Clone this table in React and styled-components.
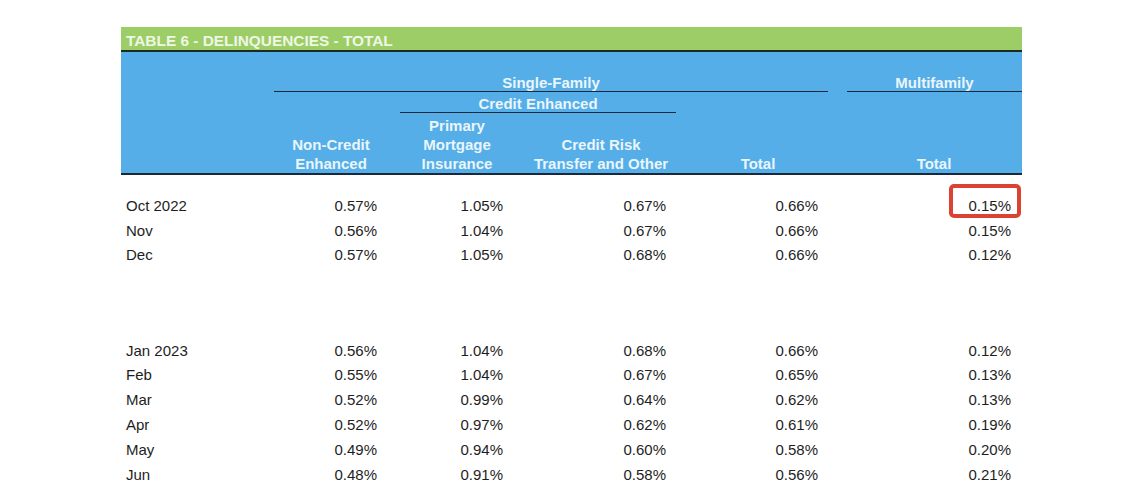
import React from 'react';
import styled, { createGlobalStyle } from 'styled-components';

const GlobalStyle = createGlobalStyle`
  body {
    margin: 0;
    background: #ffffff;
    font-family: "Liberation Sans", Arial, sans-serif;
  }
`;

// right padding of each value column, so numbers line up under their header
const columns = [
  { key: 'nce', pad: 34, head: ['Non-Credit', 'Enhanced'] },
  { key: 'pmi', pad: 33, head: ['Primary', 'Mortgage', 'Insurance'] },
  { key: 'crt', pad: 32, head: ['Credit Risk', 'Transfer and Other'] },
  { key: 'sf', pad: 39, head: ['Total'] },
  { key: 'mf', pad: 11, head: ['Total'] },
];

const firstBlock = [
  { label: 'Oct 2022', values: ['0.57%', '1.05%', '0.67%', '0.66%', '0.15%'], mark: 4 },
  { label: 'Nov', values: ['0.56%', '1.04%', '0.67%', '0.66%', '0.15%'] },
  { label: 'Dec', values: ['0.57%', '1.05%', '0.68%', '0.66%', '0.12%'] },
];

const secondBlock = [
  { label: 'Jan 2023', values: ['0.56%', '1.04%', '0.68%', '0.66%', '0.12%'] },
  { label: 'Feb', values: ['0.55%', '1.04%', '0.67%', '0.65%', '0.13%'] },
  { label: 'Mar', values: ['0.52%', '0.99%', '0.64%', '0.62%', '0.13%'] },
  { label: 'Apr', values: ['0.52%', '0.97%', '0.62%', '0.61%', '0.19%'] },
  { label: 'May', values: ['0.49%', '0.94%', '0.60%', '0.58%', '0.20%'] },
  { label: 'Jun', values: ['0.48%', '0.91%', '0.58%', '0.56%', '0.21%'] },
];

const Table = styled.div`
  width: 901px;
  margin: 27px 0 0 121px;
`;

const TitleBar = styled.div`
  height: 23px;
  background: #9dcd66;
  border-bottom: 2px solid #1c2a22;
  padding-left: 5px;
  display: flex;
  align-items: flex-end;
  color: #eef7e4;
  font-size: 15.4px;
  font-weight: 700;
  line-height: 18px;
`;

const HeaderBand = styled.div`
  background: #55aee7;
  border-bottom: 2px solid #1b2838;
  padding-top: 22px;
  color: #eaf5fc;
  font-size: 15px;
  font-weight: 700;
`;

const Grid = styled.div`
  display: grid;
  grid-template-columns: 159px 126px 125px 162px 159px 165px;
  padding-left: 5px;
`;

const GroupCell = styled.div`
  grid-column: ${(p) => p.$span};
  margin: 0 ${(p) => p.$mr}px 0 ${(p) => p.$ml}px;
  border-bottom: 1.5px solid #1b2838;
  text-align: center;
  line-height: 17px;
`;

const SubGroupRow = styled(Grid)`
  margin-top: 3px;
`;

const HeadRow = styled(Grid)`
  margin-top: 3px;
`;

const HeadCell = styled.div`
  grid-column: ${(p) => p.$col};
  padding-right: ${(p) => p.$pad}px;
  height: 57px;
  display: flex;
  flex-direction: column;
  justify-content: flex-end;
  align-items: center;
  line-height: 19px;
  white-space: nowrap;
`;

const Body = styled.div`
  padding-top: 18px;
  color: #1e1e1e;
  font-size: 15px;
`;

const Row = styled(Grid)`
  height: 24.8px;
  align-items: center;
`;

const Spacer = styled.div`
  height: 70.4px;
`;

const Label = styled.div`
  white-space: nowrap;
`;

const Value = styled.div`
  position: relative;
  text-align: right;
  padding-right: ${(p) => p.$pad}px;

  ${(p) =>
    p.$marked &&
    `
    &::after {
      content: '';
      position: absolute;
      left: 92px;
      right: 1px;
      top: -13px;
      bottom: -4px;
      border: 4px solid #da4234;
      border-radius: 5px;
    }
  `}
`;

const DataRow = ({ row }) => (
  <Row>
    <Label>{row.label}</Label>
    {row.values.map((v, i) => (
      <Value key={columns[i].key} $pad={columns[i].pad} $marked={row.mark === i}>
        {v}
      </Value>
    ))}
  </Row>
);

const App = () => (
  <>
    <GlobalStyle />
    <Table>
      <TitleBar>TABLE 6 - DELINQUENCIES - TOTAL</TitleBar>
      <HeaderBand>
        <Grid>
          <GroupCell $span="2 / 6" $ml={-11} $mr={29}>Single-Family</GroupCell>
          <GroupCell $span="6 / 7" $ml={-10} $mr={0}>Multifamily</GroupCell>
        </Grid>
        <SubGroupRow>
          <GroupCell $span="3 / 5" $ml={-11} $mr={22}>Credit Enhanced</GroupCell>
        </SubGroupRow>
        <HeadRow>
          {columns.map((c, i) => (
            <HeadCell key={c.key} $col={i + 2} $pad={c.pad}>
              {c.head.map((line) => (
                <span key={line}>{line}</span>
              ))}
            </HeadCell>
          ))}
        </HeadRow>
      </HeaderBand>
      <Body>
        {firstBlock.map((r) => (
          <DataRow key={r.label} row={r} />
        ))}
        <Spacer />
        {secondBlock.map((r) => (
          <DataRow key={r.label} row={r} />
        ))}
      </Body>
    </Table>
  </>
);

export default App;
